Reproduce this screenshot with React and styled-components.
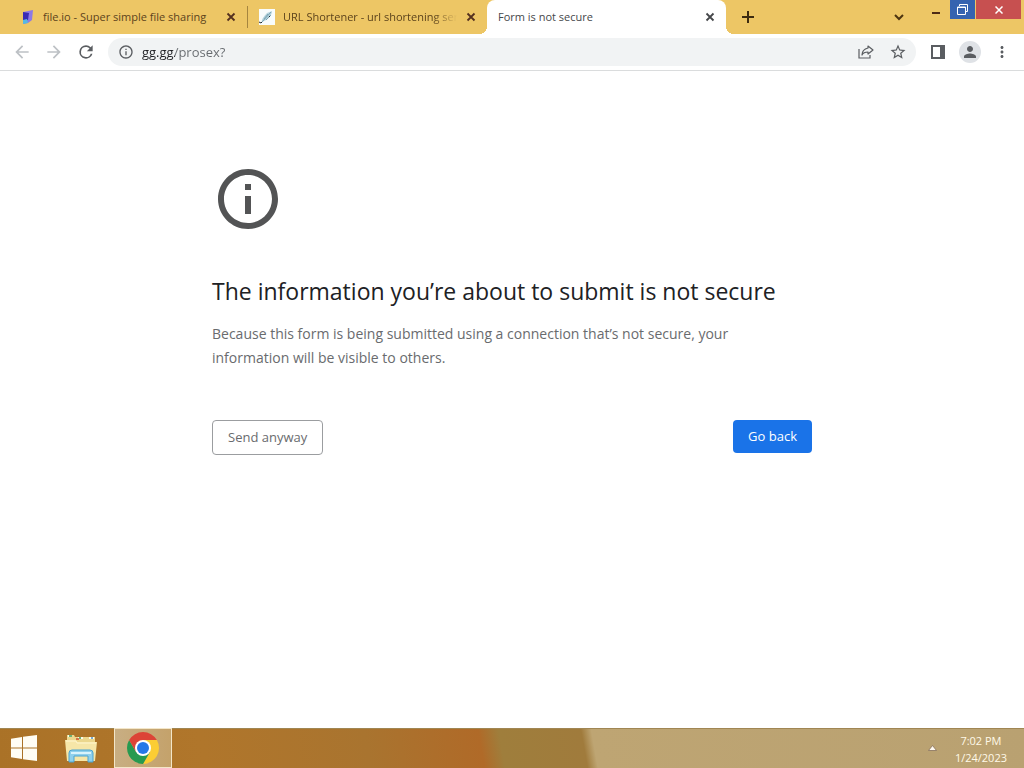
import React, { useState } from 'react'
import styled, { createGlobalStyle, css } from 'styled-components'

const style = {
  'font-family': '"Open Sans", "Noto Sans", sans-serif',
  'frame-color': '#edc665',
  'frame-text': '#5c431c',
  'icon-color': '#5a5d61',
  'border-color': '#dadcdd',
}

const GlobalStyle = createGlobalStyle`
  * {
    box-sizing: border-box;
  }
  body {
    margin: 0;
    font-family: ${style['font-family']};
    background: #fff;
  }
  button, input {
    margin: 0;
    padding: 0;
    border: 0;
    background: none;
    font-family: inherit;
  }
  svg {
    display: block;
    flex: none;
  }
`

const Screen = styled.div`
  display: flex;
  flex-direction: column;
  min-height: 100vh;
`

/* title bar */
const TitleBar = styled.header`
  display: flex;
  height: 34px;
  padding-left: 8px;
  background: ${style['frame-color']};
`
const TabList = styled.div`
  display: flex;
  flex: 0 1 718px;
  min-width: 0;
`
const Tab = styled.div`
  position: relative;
  display: flex;
  flex: 1 1 0;
  align-items: center;
  min-width: 0;
  padding: 0 10px 0 11px;
  color: ${style['frame-text']};
  ${(props) =>
    props.$divider &&
    css`
      border-right: 1px solid transparent;
      border-image: linear-gradient(
          transparent 7px,
          #a5853f 7px,
          #a5853f 27px,
          transparent 27px
        )
        1;
    `}
  ${(props) =>
    props.$active &&
    css`
      background: #fff;
      color: #45474a;
      border-radius: 8px 8px 0 0;
      &::before,
      &::after {
        content: '';
        position: absolute;
        bottom: 0;
        width: 8px;
        height: 8px;
      }
      &::before {
        right: 100%;
        background: radial-gradient(circle at 0 0, transparent 8px, #fff 8px);
      }
      &::after {
        left: 100%;
        background: radial-gradient(circle at 100% 0, transparent 8px, #fff 8px);
      }
    `}
`
const TabTitle = styled.span`
  flex: 1;
  min-width: 0;
  margin-left: ${(props) => (props.$icon ? '8px' : '0')};
  margin-right: 8px;
  overflow: hidden;
  white-space: nowrap;
  font-size: 11px;
  line-height: 16px;
  ${(props) =>
    props.$fade &&
    css`
      mask-image: linear-gradient(to left, transparent, #000 24px);
    `}
`
const IconButton = styled.button`
  display: flex;
  flex: none;
  align-items: center;
  justify-content: center;
  width: ${(props) => props.$size || 16}px;
  height: ${(props) => props.$size || 16}px;
  border-radius: 50%;
  color: ${(props) => props.$color || style['icon-color']};
`
const NewTab = styled(IconButton)`
  align-self: center;
  margin-left: 8px;
`
const WindowControls = styled.div`
  display: flex;
  align-items: flex-start;
  margin-left: auto;
  padding-right: 3px;
`
const TabSearch = styled(IconButton)`
  align-self: center;
  margin-right: 10px;
`
const ControlButton = styled.button`
  display: flex;
  align-items: center;
  justify-content: center;
  width: ${(props) => props.$width}px;
  height: 19px;
  margin-right: ${(props) => props.$gap || 0}px;
  background: ${(props) => props.$background || 'transparent'};
`

/* toolbar */
const Toolbar = styled.nav`
  display: flex;
  align-items: center;
  gap: 4px;
  height: 37px;
  padding: 0 8px;
  background: #fff;
  border-bottom: 1px solid ${style['border-color']};
`
const AddressBar = styled.label`
  display: flex;
  flex: 1;
  align-items: center;
  gap: 8px;
  min-width: 0;
  height: 28px;
  margin: 0 4px;
  padding: 0 4px 0 10px;
  border-radius: 14px;
  background: #f1f3f4;
  color: ${style['icon-color']};
`
const AddressInput = styled.input`
  flex: 1;
  min-width: 0;
  font-size: 13px;
  line-height: 20px;
  outline: none;
  /* host is darker than the path */
  color: transparent;
  caret-color: #202124;
  background: linear-gradient(to right, #202124 33px, #666a6e 33px);
  background-clip: text;
`
const Avatar = styled(IconButton)`
  margin: 0 3px;
  background: #dfe2e6;
`
const ActionGroup = styled.div`
  display: flex;
  align-items: center;
  gap: 4px;
`

/* interstitial */
const Page = styled.main`
  flex: 1;
  width: 100%;
  max-width: 648px;
  margin: 0 auto;
  padding: 92px 24px 0;
`
const Warning = styled.div`
  width: 72px;
  color: #535455;
`
const Heading = styled.h1`
  margin: 40px 0 14px;
  color: #202124;
  font-size: 23px;
  font-weight: 400;
  line-height: 33px;
`
const Description = styled.p`
  margin: 0;
  padding-right: 24px;
  color: #696b6e;
  font-size: 14px;
  line-height: 24px;
`
const ButtonRow = styled.div`
  display: flex;
  align-items: flex-start;
  justify-content: space-between;
  margin-top: 50px;
`
const Button = styled.button`
  padding: 8px 15px;
  border-radius: 4px;
  font-size: 13px;
  line-height: 17px;
  ${(props) =>
    props.$primary
      ? css`
          background: #1a73e8;
          color: #fff;
        `
      : css`
          border: 1px solid #9b9da0;
          color: #696b6e;
        `}
`

/* taskbar */
const Taskbar = styled.footer`
  display: flex;
  align-items: stretch;
  height: 40px;
  box-shadow: inset 0 1px #a08653;
  background: linear-gradient(
    80deg,
    #aa7227 0,
    #b0762b 20%,
    #a9742f 36%,
    #b06a28 47%,
    #9f7e3c 49%,
    #a07b3c 57%,
    #bea573 58%,
    #b9a171 100%
  );
`
const TaskButton = styled.button`
  display: flex;
  align-items: center;
  justify-content: center;
  width: ${(props) => props.$width}px;
  ${(props) =>
    props.$active &&
    css`
      border: 1px solid #f3e6c9;
      background: linear-gradient(to right, #c8ae83, #c4a26b);
    `}
`
const Tray = styled.div`
  display: flex;
  align-items: center;
  gap: 14px;
  margin-left: auto;
  padding-right: 17px;
`
const Clock = styled.time`
  padding-top: 2px;
  color: #fff9e8;
  font-size: 11px;
  line-height: 17px;
  text-align: center;
`

const Cross = () => (
  <svg width="10" height="10" viewBox="0 0 10 10" aria-hidden="true">
    <path d="M1.500 1.500l7 7M8.500 1.500l-7 7" stroke="currentColor" strokeWidth="1.800" />
  </svg>
)

const MaterialIcon = ({ path, size = 20 }) => (
  <svg width={size} height={size} viewBox="0 0 24 24" fill="currentColor" aria-hidden="true">
    <path d={path} />
  </svg>
)

const icons = {
  back: 'M20 11H7.83l5.59-5.59L12 4l-8 8 8 8 1.41-1.41L7.83 13H20v-2z',
  forward: 'M12 4l-1.41 1.41L16.17 11H4v2h12.17l-5.58 5.59L12 20l8-8z',
  reload:
    'M17.65 6.35A7.96 7.96 0 0 0 12 4a8 8 0 1 0 7.73 10h-2.08A6 6 0 1 1 12 6c1.66 0 3.14.69 4.22 1.78L13 11h7V4l-2.35 2.35z',
  info: 'M11 17h2v-6h-2v6zm1-15C6.48 2 2 6.48 2 12s4.48 10 10 10 10-4.48 10-10S17.52 2 12 2zm0 18c-4.41 0-8-3.59-8-8s3.59-8 8-8 8 3.59 8 8-3.59 8-8 8zM11 9h2V7h-2v2z',
  star: 'M22 9.24l-7.19-.62L12 2 9.19 8.63 2 9.24l5.46 4.73L5.82 21 12 17.27 18.18 21l-1.63-7.03L22 9.24zM12 15.4l-3.76 2.27 1-4.28-3.32-2.88 4.38-.38L12 6.1l1.71 4.04 4.38.38-3.32 2.88 1 4.28L12 15.4z',
  person:
    'M12 12c2.21 0 4-1.79 4-4s-1.79-4-4-4-4 1.79-4 4 1.79 4 4 4zm0 2c-2.67 0-8 1.34-8 4v2h16v-2c0-2.66-5.33-4-8-4z',
  more: 'M12 8c1.1 0 2-.9 2-2s-.9-2-2-2-2 .9-2 2 .9 2 2 2zm0 2c-1.1 0-2 .9-2 2s.9 2 2 2 2-.9 2-2-.9-2-2-2zm0 6c-1.1 0-2 .9-2 2s.9 2 2 2 2-.9 2-2-.9-2-2-2z',
}

const FileIoIcon = () => (
  <svg width="16" height="16" viewBox="0 0 16 16" aria-hidden="true">
    <path d="M4 3l10-2-1 10-4 3-5 1z" fill="#8d79e6" />
    <path d="M4 3l6 1-1 7-5 1z" fill="#3a2bb4" />
    <path d="M4 11l4-1 1 4-5 1z" fill="#55b9e4" />
  </svg>
)

const LinkIcon = () => (
  <svg width="16" height="16" viewBox="0 0 16 16" aria-hidden="true">
    <rect width="16" height="16" fill="#f8fcfc" />
    <path d="M0 13l2 1 2-2" stroke="#222c33" fill="none" />
    <path d="M3 13c-1-2 2-6 5-9l5-2c0 4-4 9-10 11z" fill="#b7d5de" />
    <path d="M3 13l9-10M5 10l4-5M7 11l5-5" stroke="#7da7b6" strokeWidth="1" />
    <path d="M10 8l1-1" stroke="#182a33" strokeWidth="1" />
  </svg>
)

const ShareIcon = () => (
  <svg width="16" height="16" viewBox="0 0 16 16" fill="none" stroke="currentColor" aria-hidden="true">
    <path d="M1 5v9h11v-3" strokeWidth="1.200" />
    <path d="M10 2l5 4-5 4V8C7 8 5 9 4 11c0-4 2-6 6-7z" strokeWidth="1.200" strokeLinejoin="round" />
  </svg>
)

const PanelIcon = () => (
  <svg width="14" height="14" viewBox="0 0 14 14" aria-hidden="true">
    <path d="M1 1h12v12H1z" fill="none" stroke="currentColor" strokeWidth="2" />
    <path d="M9 1h4v12H9z" fill="currentColor" />
  </svg>
)

const WindowsIcon = () => (
  <svg width="28" height="28" viewBox="0 0 28 28" fill="#fffdf4" aria-hidden="true">
    <path d="M1 4.800L12 3v10.500H1zM13 2.800L27 1v12.500H13zM1 14.500h11V25L1 23.200zM13 14.500h14V27L13 25.200z" />
  </svg>
)

const ExplorerIcon = () => (
  <svg width="34" height="32" viewBox="0 0 34 32" aria-hidden="true">
    <path d="M3 3h7l1 2h20v6H3z" fill="#ecd78d" />
    <path d="M4 3h4v2H4zM14 5h5v2h-5zM25 5h5v2h-5z" fill="#fdfbe9" />
    <path d="M5 4h3M15 6h2" stroke="#3f9b53" strokeWidth="1.500" />
    <path d="M12 7h3" stroke="#d0502e" strokeWidth="1.500" />
    <path d="M27 6h2" stroke="#4b8fc8" strokeWidth="1.500" />
    <path d="M1 8h11l1 2h20l-2 19H3z" fill="#f6e6a8" />
    <path d="M2 9h10l1 2h19" stroke="#fff5cd" fill="none" />
    <path d="M5 30V21q0-3 3-3h18q3 0 3 3v9h-5v-6H10v6z" fill="#8fd0ec" stroke="#4ba3d0" />
    <path d="M7 21h20" stroke="#d8f3fc" strokeWidth="2" />
  </svg>
)

const ChromeIcon = () => (
  <svg width="32" height="32" viewBox="0 0 48 48" aria-hidden="true">
    <path d="M24 12h20.780A24 24 0 0 1 24 48l10.400-18z" fill="#fccd33" />
    <path d="M13.600 30L3.220 12A24 24 0 0 0 24 48l10.400-18z" fill="#279a50" />
    <path d="M24 12h20.780A24 24 0 0 0 3.220 12l10.400 18z" fill="#dc4437" />
    <circle cx="24" cy="24" r="12" fill="#fff" />
    <circle cx="24" cy="24" r="9" fill="#2678e8" />
  </svg>
)

const tabs = [
  { title: 'file.io - Super simple file sharing', icon: <FileIoIcon />, divider: true },
  { title: 'URL Shortener - url shortening service', icon: <LinkIcon />, fade: true },
  { title: 'Form is not secure', active: true },
]

const TitleBarView = () => (
  <TitleBar>
    <TabList>
      {tabs.map((tab) => (
        <Tab key={tab.title} $active={tab.active} $divider={tab.divider}>
          {tab.icon}
          <TabTitle $icon={!!tab.icon} $fade={tab.fade}>
            {tab.title}
          </TabTitle>
          <IconButton $size={12} $color={tab.active ? '#45474a' : '#54301f'} aria-label="Close tab">
            <Cross />
          </IconButton>
        </Tab>
      ))}
    </TabList>
    <NewTab $size={28} $color="#3d2b10" aria-label="New tab">
      <svg width="12" height="12" viewBox="0 0 12 12" aria-hidden="true">
        <path d="M6 0v12M0 6h12" stroke="currentColor" strokeWidth="2" />
      </svg>
    </NewTab>
    <WindowControls>
      <TabSearch $size={28} $color="#4d3510" aria-label="Search tabs">
        <svg width="10" height="7" viewBox="0 0 10 7" aria-hidden="true">
          <path d="M1 1l4 4 4-4" stroke="currentColor" strokeWidth="2" fill="none" />
        </svg>
      </TabSearch>
      <ControlButton $width={26} $gap={1} aria-label="Minimize">
        <svg width="8" height="12" viewBox="0 0 8 12" aria-hidden="true">
          <path d="M0 9h8" stroke="#4d2a16" strokeWidth="2" />
        </svg>
      </ControlButton>
      <ControlButton $width={25} $gap={1} $background="#3563b0" aria-label="Restore">
        <svg width="11" height="11" viewBox="0 0 11 11" fill="none" stroke="#fff" aria-hidden="true">
          <path d="M2.500 2V.500h8v7H9M.500 3h8v7.500h-8zM.500 3.500h8" />
        </svg>
      </ControlButton>
      <ControlButton $width={45} $background="#c75050" aria-label="Close">
        <svg width="8" height="8" viewBox="0 0 8 8" aria-hidden="true">
          <path d="M0.500 .500l7 7M7.500 .500l-7 7" stroke="#fff" strokeWidth="1.500" />
        </svg>
      </ControlButton>
    </WindowControls>
  </TitleBar>
)

const ToolbarView = () => {
  const [url, setUrl] = useState('gg.gg/prosex?')
  return (
    <Toolbar>
      <IconButton $size={28} $color="#bdc1c5" aria-label="Back">
        <MaterialIcon path={icons.back} />
      </IconButton>
      <IconButton $size={28} $color="#bdc1c5" aria-label="Forward">
        <MaterialIcon path={icons.forward} />
      </IconButton>
      <IconButton $size={28} aria-label="Reload">
        <MaterialIcon path={icons.reload} />
      </IconButton>
      <AddressBar>
        <MaterialIcon path={icons.info} size={16} />
        <AddressInput
          type="text"
          aria-label="Address"
          value={url}
          onChange={(e) => setUrl(e.target.value)}
        />
        <ActionGroup>
          <IconButton $size={28} aria-label="Share this page">
            <ShareIcon />
          </IconButton>
          <IconButton $size={28} aria-label="Bookmark this tab">
            <MaterialIcon path={icons.star} size={18} />
          </IconButton>
        </ActionGroup>
      </AddressBar>
      <IconButton $size={28} aria-label="Side panel">
        <PanelIcon />
      </IconButton>
      <Avatar $size={22} aria-label="Profile">
        <MaterialIcon path={icons.person} size={18} />
      </Avatar>
      <IconButton $size={28} aria-label="Menu">
        <MaterialIcon path={icons.more} size={18} />
      </IconButton>
    </Toolbar>
  )
}

const App = () => (
  <Screen>
    <GlobalStyle />
    <TitleBarView />
    <ToolbarView />
    <Page>
      <Warning>
        <MaterialIcon path={icons.info} size={72} />
      </Warning>
      <Heading>The information you’re about to submit is not secure</Heading>
      <Description>
        Because this form is being submitted using a connection that’s not secure, your
        information will be visible to others.
      </Description>
      <ButtonRow>
        <Button>Send anyway</Button>
        <Button $primary>Go back</Button>
      </ButtonRow>
    </Page>
    <Taskbar>
      <TaskButton $width={48} aria-label="Start">
        <WindowsIcon />
      </TaskButton>
      <TaskButton $width={66} aria-label="File Explorer">
        <ExplorerIcon />
      </TaskButton>
      <TaskButton $width={58} $active aria-label="Google Chrome">
        <ChromeIcon />
      </TaskButton>
      <Tray>
        <IconButton $color="#fff9f0" aria-label="Show hidden icons">
          <svg width="9" height="6" viewBox="0 0 9 6" aria-hidden="true">
            <path d="M4.500 .500L8.500 5.500h-8z" fill="currentColor" stroke="#86705a" strokeWidth=".800" />
          </svg>
        </IconButton>
        <Clock dateTime="2023-01-24T19:02">
          7:02 PM
          <br />
          1/24/2023
        </Clock>
      </Tray>
    </Taskbar>
  </Screen>
)

export default App
